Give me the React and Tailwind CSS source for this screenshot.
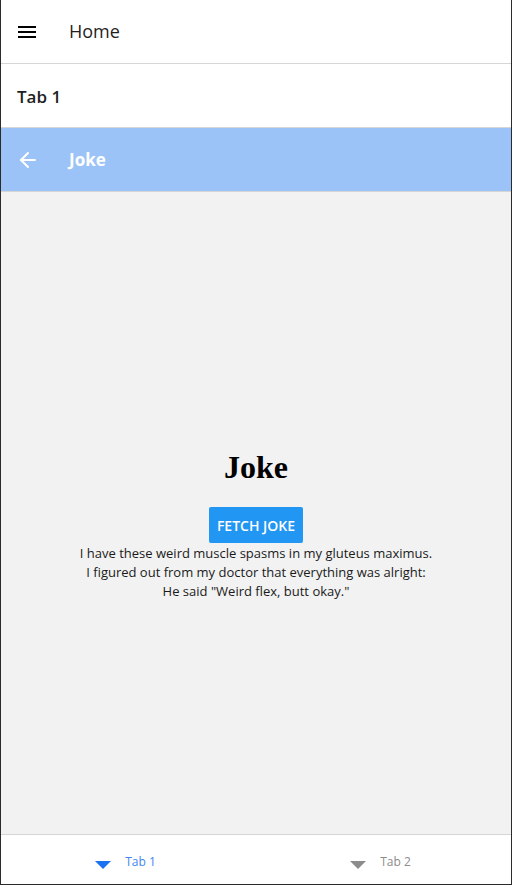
import { ArrowLeft } from 'lucide-react';

const sans = { fontFamily: '"Open Sans", "Noto Sans", sans-serif' };

function TabItem({ label, active }) {
    return (
        <div className="flex-1 flex items-center justify-center gap-[14px] pr-[6px] pt-[5px]">
            <svg width="16" height="8" viewBox="0 0 16 8" className="mt-[6px]">
                <polygon points="0,0 16,0 8,8" fill={active ? '#1a73f0' : '#8c8c8c'} />
            </svg>
            <span className={`text-[12px] ${active ? 'text-[#3f86f5]' : 'text-[#8c8c8c]'}`}>{label}</span>
        </div>
    );
}

export default function App() {
    return (
        <div className="w-[512px] h-[885px] flex flex-col bg-white border-x border-b border-[#2b2b2b] overflow-hidden" style={sans}>
            {/* HEADER */}
            <div className="h-[64px] shrink-0 flex items-center border-b border-[#d6d6d6]">
                <svg width="18" height="12" viewBox="0 0 18 12" className="ml-[17px] mt-[1px]">
                    <rect x="0" y="0" width="18" height="2" fill="#000" />
                    <rect x="0" y="5" width="18" height="2" fill="#000" />
                    <rect x="0" y="10" width="18" height="2" fill="#000" />
                </svg>
                <span className="ml-[33px] text-[18px] font-medium text-[#1f1f1f]">Home</span>
            </div>

            {/* TAB TITLE */}
            <div className="h-[64px] shrink-0 flex items-center border-b border-[#d6d6d6]">
                <span className="ml-[16px] mt-[3px] text-[17px] font-semibold text-[#1f1f1f]">Tab 1</span>
            </div>

            {/* JOKE BAR */}
            <div className="h-[64px] shrink-0 flex items-center bg-[#9bc3f7] border-b border-[#d6d6d6]">
                <ArrowLeft size={24} strokeWidth={2} className="ml-[15px] text-white" />
                <span className="ml-[29px] text-[17px] font-bold text-white">Joke</span>
            </div>

            {/* CONTENT */}
            <div className="flex-1 bg-[#f2f2f2] flex flex-col items-center justify-center pt-[26px]">
                <h1 className="text-[32px] font-bold text-black leading-none" style={{ fontFamily: '"Liberation Serif", serif' }}>Joke</h1>
                <button className="mt-[24px] bg-[#2196f3] text-white text-[14px] font-semibold px-[8px] h-[36px] rounded-[2px]">FETCH JOKE</button>
                <div className="text-[13px] leading-[19px] text-[#1a1a1a] text-center mt-[1px]">
                    <p>I have these weird muscle spasms in my gluteus maximus.</p>
                    <p>I figured out from my doctor that everything was alright:</p>
                    <p>He said "Weird flex, butt okay."</p>
                </div>
            </div>

            {/* BOTTOM TABS */}
            <div className="h-[50px] shrink-0 flex border-t border-[#d6d6d6] bg-white">
                <TabItem label="Tab 1" active />
                <TabItem label="Tab 2" />
            </div>
        </div>
    );
}
